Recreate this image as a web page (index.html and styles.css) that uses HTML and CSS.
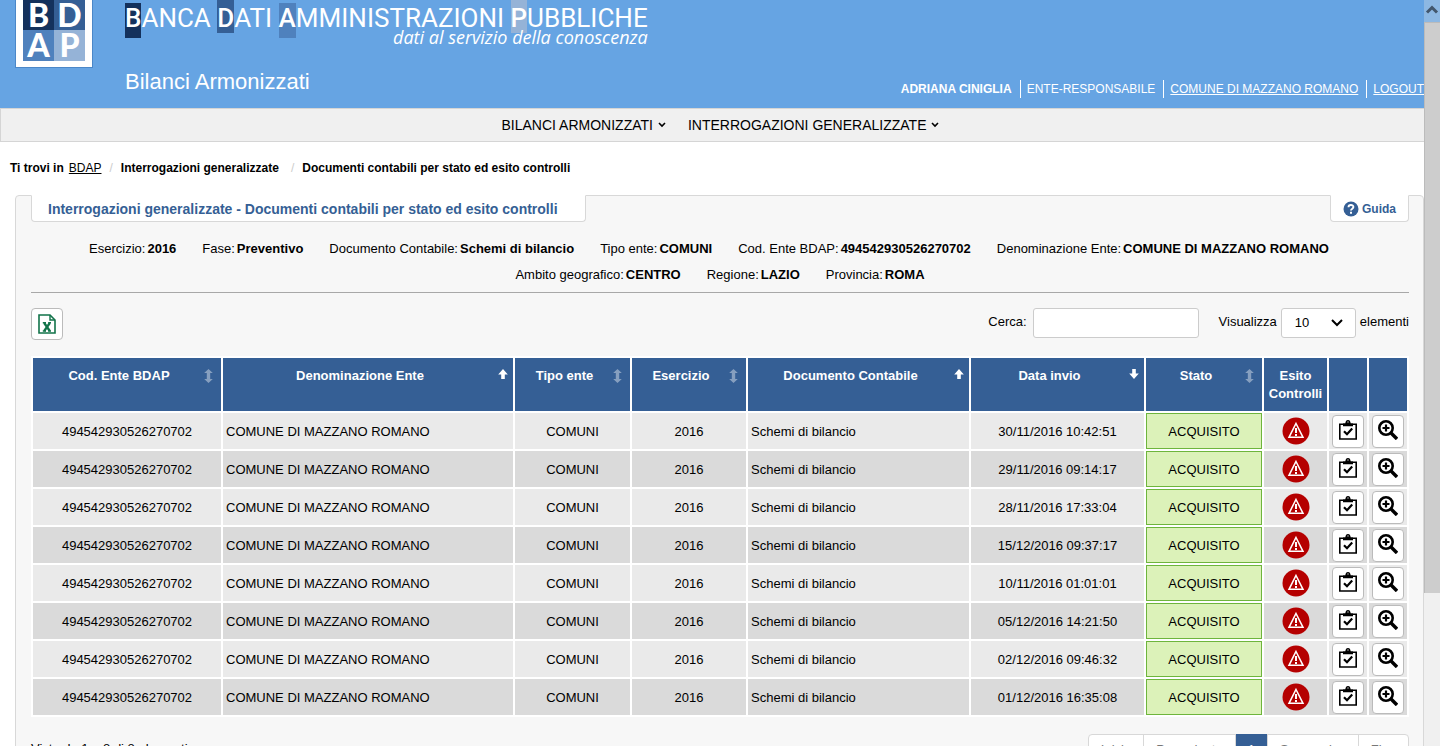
FILE: index.html
```html
<!DOCTYPE html>
<html lang="it">
<head>
<meta charset="utf-8">
<title>BDAP - Bilanci Armonizzati</title>
<link rel="stylesheet" href="styles.css">
</head>
<body>
<svg class="defs" width="0" height="0" aria-hidden="true">
  <symbol id="chev" viewBox="0 0 8 6"><path d="M1 1l3 3 3-3" fill="none" stroke="currentColor" stroke-width="1.6"/></symbol>
  <symbol id="both" viewBox="0 0 9 14"><path d="M4.500 0L8.800 4H6.200V10H8.800L4.500 14 .2 10H2.800V4H.2z" fill="currentColor"/></symbol>
  <symbol id="up" viewBox="0 0 10 10"><path d="M5 0L9.800 5.600H6.800V10H3.200V5.600H.2z" fill="currentColor"/></symbol>
  <symbol id="down" viewBox="0 0 10 10"><path d="M5 10L9.800 4.400H6.800V0H3.200V4.400H.2z" fill="currentColor"/></symbol>
  <symbol id="warn" viewBox="0 0 28 28"><circle cx="14" cy="14" r="13.500" fill="#b50000"/><path d="M14 6.500L21 20.300H7z" fill="none" stroke="#fff" stroke-width="1.500"/><path d="M14 11v5M14 17v2" stroke="#fff" stroke-width="2"/></symbol>
  <symbol id="clip" viewBox="0 0 18 20"><path d="M.8 4.200H17.200V19H.8z" fill="#fff" stroke="#000" stroke-width="1.600"/><path d="M4 6.200V3.400H6.300C6.500 1.200 7.500 0 9 0S11.500 1.200 11.700 3.400H14V6.200z" fill="#000"/><path d="M8.400 1.600h1.200v1H8.400z" fill="#fff"/><path d="M5 11.200l3 3 5.200-5.600" fill="none" stroke="#000" stroke-width="2.200"/></symbol>
  <symbol id="lens" viewBox="0 0 20 20"><circle cx="8" cy="8" r="6.700" fill="none" stroke="#000" stroke-width="2.600"/><path d="M8 4.500v7M4.500 8h7" stroke="#000" stroke-width="2.200"/><path d="M12.800 12.800l6.200 6.200" stroke="#000" stroke-width="3.400"/></symbol>
</svg>
<div class="page">
  <header class="header">
    <div class="logo"><span class="c1">B</span><span class="c2">D</span><span class="c3">A</span><span class="c4">P</span></div>
    <div class="brand">
      <div class="titles">
        <div class="title"><b class="c1 low">B</b>ANCA <b class="c2 high">D</b>ATI <b class="c3 low">A</b>MMINISTRAZIONI <b class="c4 high">P</b>UBBLICHE</div>
        <div class="motto">dati al servizio della conoscenza</div>
      </div>
      <h1 class="app">Bilanci Armonizzati</h1>
    </div>
    <div class="user"><strong>ADRIANA CINIGLIA</strong><span>ENTE-RESPONSABILE</span><span><a href="#">COMUNE DI MAZZANO ROMANO</a></span><span><a href="#">LOGOUT</a></span></div>
  </header>
  <nav class="menu">
    <a href="#">BILANCI ARMONIZZATI<svg width="8" height="6"><use href="#chev"/></svg></a>
    <a href="#">INTERROGAZIONI GENERALIZZATE<svg width="8" height="6"><use href="#chev"/></svg></a>
  </nav>
  <div class="crumbs"><span>Ti trovi in</span><a href="#">BDAP</a><i>/</i><span>Interrogazioni generalizzate</span><i class="wide">/</i><span>Documenti contabili per stato ed esito controlli</span></div>
  <main class="panel">
    <div class="tabs">
      <h2 class="tab">Interrogazioni generalizzate - Documenti contabili per stato ed esito controlli</h2>
      <a class="tab help" href="#"><svg width="16" height="16" viewBox="0 0 16 16"><circle cx="8" cy="8" r="7.500" fill="#355f95"/><path d="M5.500 6.200C5.500 3.300 10.400 3.300 10.400 6.100C10.400 7.800 8 7.600 8 9.600" fill="none" stroke="#fff" stroke-width="1.900"/><path d="M7 10.800h2v1.900H7z" fill="#fff"/></svg>Guida</a>
    </div>
    <div class="filters">
      <div class="frow first"><span>Esercizio: <b>2016</b></span><span>Fase: <b>Preventivo</b></span><span>Documento Contabile: <b>Schemi di bilancio</b></span><span>Tipo ente: <b>COMUNI</b></span><span>Cod. Ente BDAP: <b>494542930526270702</b></span><span>Denominazione Ente: <b>COMUNE DI MAZZANO ROMANO</b></span></div>
      <div class="frow"><span>Ambito geografico: <b>CENTRO</b></span><span>Regione: <b>LAZIO</b></span><span>Provincia: <b>ROMA</b></span></div>
    </div>
    <div class="tools">
      <button class="btn" type="button" aria-label="Esporta in Excel"><svg width="18" height="20" viewBox="0 0 18 20"><path d="M1 1H12L17 6V19H1z" fill="#fff" stroke="#12734a" stroke-width="1.600"/><path d="M12 1V6H17" fill="none" stroke="#12734a" stroke-width="1.400"/><path d="M6.200 9L11.800 17M11.800 9L6.200 17" stroke="#12734a" stroke-width="2.300"/><path d="M4.800 8.800H8M10.200 8.800H13M4.800 17H8M10.200 17H13" stroke="#12734a" stroke-width="1.400"/></svg></button>
      <label class="search" for="q">Cerca:</label><input id="q" class="field" type="text">
      <label for="n">Visualizza</label>
      <span class="pick"><select id="n" class="field"><option>10</option></select><svg width="12" height="8" viewBox="0 0 12 8"><path d="M1 1l5 5 5-5" fill="none" stroke="#000" stroke-width="2"/></svg></span>
      <span class="unit">elementi</span>
    </div>
    <table class="grid">
      <colgroup><col class="w1"><col><col class="w3"><col class="w4"><col class="w5"><col class="w6"><col class="w7"><col class="w8"><col class="w9"><col class="w9"></colgroup>
      <thead><tr>
        <th><div class="th">Cod. Ente BDAP<svg class="both" width="9" height="14"><use href="#both"/></svg></div></th>
        <th><div class="th">Denominazione Ente<svg width="10" height="10"><use href="#up"/></svg></div></th>
        <th><div class="th">Tipo ente<svg class="both" width="9" height="14"><use href="#both"/></svg></div></th>
        <th><div class="th">Esercizio<svg class="both" width="9" height="14"><use href="#both"/></svg></div></th>
        <th><div class="th">Documento Contabile<svg width="10" height="10"><use href="#up"/></svg></div></th>
        <th><div class="th">Data invio<svg width="10" height="10"><use href="#down"/></svg></div></th>
        <th><div class="th">Stato<svg class="both" width="9" height="14"><use href="#both"/></svg></div></th>
        <th>Esito Controlli</th><th></th><th></th>
      </tr></thead>
      <tbody id="rows"></tbody>
    </table>
    <div class="foot">
      <span>Vista da 1 a 8 di 8 elementi</span>
      <div class="pager"><button type="button">Inizio</button><button type="button">Precedente</button><button type="button" class="on">1</button><button type="button">Successivo</button><button type="button">Fine</button></div>
    </div>
  </main>
</div>
<div class="scroll"><svg width="16" height="22" viewBox="0 0 16 22"><path d="M3 12.500l5-5 5 5" fill="none" stroke="#42566c" stroke-width="3"/></svg><div class="thumb"></div></div>
<script src="rows.js"></script>
</body>
</html>
```
FILE: styles.css
```css
* { box-sizing: border-box; }
body { margin: 0; height: 100vh; overflow: hidden; display: flex; background: #fff; color: #000; font: 13px/18px "Liberation Sans", Arial, sans-serif; }
.defs { position: absolute; }
a { color: inherit; }
.page { flex: 1; min-width: 0; overflow: hidden; display: flex; flex-direction: column; }
.page > * { flex-shrink: 0; }
.scroll { width: 16px; background: #f0f0f0; }
.scroll svg { display: block; background: #8db8e3; }
.thumb { height: 76.500%; background: #cdcdcd; border: 1px solid #bbb; border-width: 1px 0 0 1px; }

.header { display: flex; align-items: flex-start; height: 108px; padding-left: 15px; background: #66a4e3; color: #fff; }
.logo { display: grid; grid-template: 30px 31px / 31px 31px; width: 78px; padding: 0 7px 6px; background: #fff; border: 1px solid #4b87c8; border-top: 0; font: 900 32px/30px Lato, sans-serif; text-align: center; }
.c1 { background: #14315c; }
.c2 { background: #355f95; }
.c3 { background: #4f81bd; }
.c4 { background: #95b3d7; }
.brand { padding-left: 32px; }
.titles { width: max-content; }
.title { padding-top: 4px; font: 400 26px/28px Roboto, sans-serif; white-space: nowrap; }
.title b { font-weight: 500; }
.title .low { padding-bottom: 5px; }
.title .high { padding-top: 3px; }
.motto { margin-top: -3px; font: italic 500 18px/16px "Open Sans", sans-serif; text-align: right; }
.app { margin: 24px 0 0; font-size: 22px; line-height: 26px; font-weight: 400; }
.user { display: flex; margin: 80px 0 0 auto; font-size: 12px; line-height: 18px; white-space: nowrap; }
.user span { margin-left: 8px; padding-left: 6px; border-left: 1px solid #fff; }

.menu { display: flex; justify-content: center; gap: 22px; padding: 7px 0 7px 16px; background: #f0f0f0; border: solid #d5d5d5; border-width: 1px 0 1px 1px; font-size: 14px; }
.menu a { display: flex; align-items: center; gap: 5px; text-decoration: none; }

.crumbs { display: flex; padding: 17px 10px 0; font-size: 12px; font-weight: 700; }
.crumbs a { margin-left: 5px; font-weight: 400; }
.crumbs i { margin: 0 8px; color: #ccc; font-style: normal; font-weight: 400; }
.crumbs .wide { margin-left: 12px; }

.panel { margin: 18px 0 0 15px; padding: 0 14px 15px 15px; background: #f7f7f7; border: 1px solid #d8d8d8; border-radius: 4px 4px 0 0; }
.tabs { display: flex; justify-content: space-between; margin-top: -1px; }
.tab { display: flex; align-items: center; gap: 3px; margin: 0; padding: 4px 27px 3px 16px; background: #fff; border: 1px solid #d8d8d8; border-top-color: #fff; border-radius: 0 0 4px 4px; color: #355f95; font-size: 14px; line-height: 18px; font-weight: 700; text-decoration: none; }
.help { padding: 4px 12px 3px; font-size: 12px; }
.filters { display: grid; gap: 8px; padding: 18px 0 8px; border-bottom: 1px solid #a8a8a8; }
.frow { display: flex; flex-wrap: wrap; justify-content: center; gap: 8px 26px; }
.frow span { display: flex; gap: 2px; }
.first { padding-right: 22px; }
.tools { display: flex; align-items: flex-start; padding: 15px 0 16px; }
.tools label, .unit { padding-top: 5px; }
.btn { display: inline-flex; align-items: center; justify-content: center; width: 32px; height: 32px; padding: 0; background: #fff; border: 1px solid #bbb; border-radius: 4px; vertical-align: middle; }
.search { margin-left: auto; }
.field { height: 30px; border: 1px solid #ccc; border-radius: 3px; background: #fff; font: inherit; color: inherit; }
input.field { width: 166px; margin: 0 20px 0 6px; }
.pick { display: grid; align-items: center; margin: 0 4px; }
.pick select { grid-area: 1 / 1; appearance: none; width: 75px; padding: 0 13px; }
.pick svg { grid-area: 1 / 1; justify-self: end; margin-right: 13px; pointer-events: none; }

.grid { width: 100%; table-layout: fixed; border-spacing: 2px; background: #fff; }
.w1 { width: 188px; } .w3 { width: 115px; } .w4 { width: 114px; } .w5 { width: 221px; } .w6 { width: 173px; } .w7 { width: 116px; } .w8 { width: 63px; } .w9 { width: 38px; }
th { height: 53px; padding: 9px 2px 8px; vertical-align: top; background: #355f95; color: #fff; }
.th { display: grid; grid-template-columns: 1fr 14px; align-items: start; padding-right: 2px; }
.th svg { margin: 2px 0 0 3px; }
.th .both { margin-left: 1px; opacity: .4; }
td { height: 36px; padding: 2px 3px 0; text-align: center; background: #eaeaea; white-space: nowrap; }
td.icon { padding: 0 3px; }
tr:nth-child(even) td { background: #dadada; }
td.l { text-align: left; }
tbody td.ok, tbody tr:nth-child(even) td.ok { background: #dcf2b9; border: 1px solid #6eb53c; }
td svg { display: block; margin: auto; }
td .btn { height: 33px; padding-bottom: 2px; }

.foot { display: flex; justify-content: space-between; align-items: flex-start; padding-top: 17px; }
.foot > span { padding-top: 6px; }
.pager { display: flex; border: 1px solid #d8d8d8; border-radius: 4px; background: #fff; }
.pager button { padding: 6px 12px; border: 0; border-right: 1px solid #d8d8d8; background: none; color: #777; font: inherit; }
.pager button:last-child { border: 0; }
.pager .on { margin-top: -1px; padding-top: 7px; background: #355f95; color: #fff; }
```
FILE: rows.js
```js
const dates = ["30/11/2016 10:42:51", "29/11/2016 09:14:17", "28/11/2016 17:33:04", "15/12/2016 09:37:17", "10/11/2016 01:01:01", "05/12/2016 14:21:50", "02/12/2016 09:46:32", "01/12/2016 16:35:08"];
document.getElementById("rows").innerHTML = dates.map(d => `<tr>
  <td>494542930526270702</td><td class="l">COMUNE DI MAZZANO ROMANO</td><td>COMUNI</td><td>2016</td>
  <td class="l">Schemi di bilancio</td><td>${d}</td><td class="ok">ACQUISITO</td>
  <td class="icon"><svg width="28" height="28"><use href="#warn"/></svg></td>
  <td class="icon"><button class="btn" type="button" aria-label="Controlli"><svg width="18" height="20"><use href="#clip"/></svg></button></td>
  <td class="icon"><button class="btn" type="button" aria-label="Dettaglio"><svg width="20" height="20"><use href="#lens"/></svg></button></td>
</tr>`).join("");
```
